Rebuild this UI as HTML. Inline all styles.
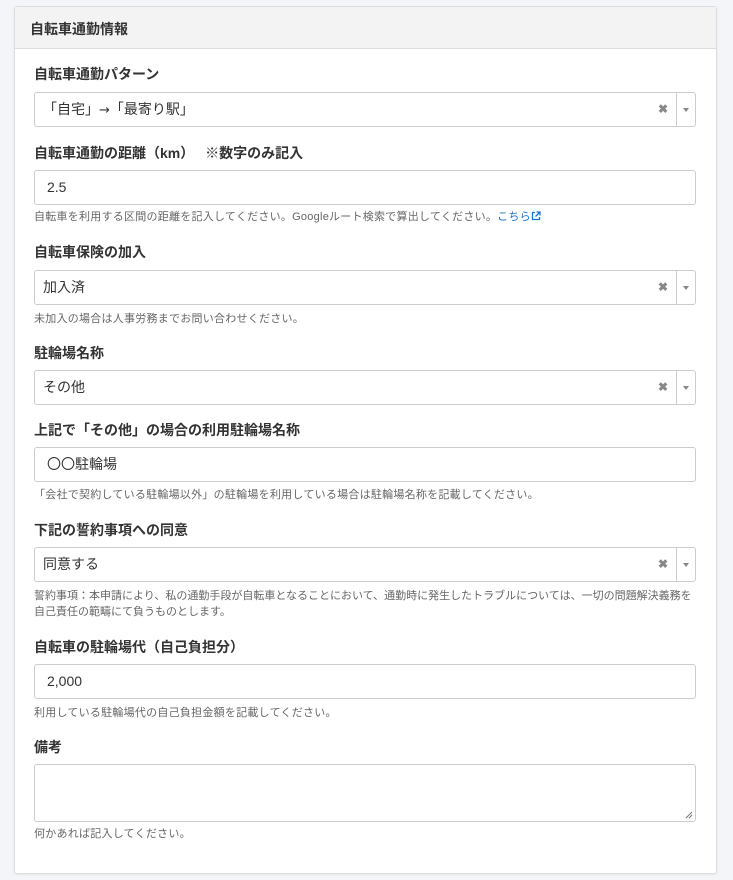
<!DOCTYPE html>
<html><head><meta charset="utf-8"><style>
*{box-sizing:border-box;margin:0;padding:0}
body{width:733px;height:880px;background:#f4f5f8;font-family:"Liberation Sans","Noto Sans CJK JP",sans-serif;color:#333;position:relative;overflow:hidden}
.panel{position:absolute;left:14px;top:6px;width:703px;height:868px;background:#fff;border:1px solid #ddd;border-radius:3px;box-shadow:0 1px 2px rgba(0,0,0,.06)}
.hd{position:absolute;left:0;top:0;right:0;height:42px;background:#f3f3f3;border-bottom:1px solid #ddd;font-size:14px;font-weight:bold;padding:12px 15px;color:#333}
.a{position:absolute;left:34px}
.lb{font-size:14px;font-weight:bold;color:#333;line-height:20px}
.in{width:662px;height:35px;border:1px solid #ccc;border-radius:3px;background:#fff;font-size:14px;padding:0 12px;line-height:33px;color:#333}
.sel{padding-left:8px}
.sel .x{position:absolute;right:27px;top:0;font-size:12px;color:#888;font-weight:bold}
.sel .ar{position:absolute;right:0;top:0;width:19px;height:33px;border-left:1px solid #ccc}
.sel .ar:after{content:"";position:absolute;left:6px;top:15px;border-left:3.5px solid transparent;border-right:3.5px solid transparent;border-top:4px solid #888}
.hp{font-size:11px;color:#666;line-height:16px;width:662px;letter-spacing:.25px}
a{color:#1a73c8;text-decoration:none}
</style></head><body>
<div class="panel"><div class="hd">自転車通勤情報</div></div>

<div class="a lb" style="top:64px">自転車通勤パターン</div>
<div class="a in sel" style="top:92px">「自宅」<span style="font-family:'DejaVu Sans';font-size:13px">→</span>「最寄り駅」<span class="x">✖</span><span class="ar"></span></div>

<div class="a lb" style="top:143px">自転車通勤の距離（km）　 ※数字のみ記入</div>
<div class="a in" style="top:170px">2.5</div>
<div class="a hp" style="top:209px">自転車を利用する区間の距離を記入してください。Googleルート検索で算出してください。<a>こちら<svg width="10" height="10" viewBox="0 0 10 10" style="vertical-align:-1px"><path d="M4 1.5H1.5v7h7V6" fill="none" stroke="#1a73c8" stroke-width="1.3"/><path d="M5.5 1h3.5v3.5M9 1L4.5 5.5" fill="none" stroke="#1a73c8" stroke-width="1.3"/></svg></a></div>

<div class="a lb" style="top:242px">自転車保険の加入</div>
<div class="a in sel" style="top:270px">加入済<span class="x">✖</span><span class="ar"></span></div>
<div class="a hp" style="top:311px">未加入の場合は人事労務までお問い合わせください。</div>

<div class="a lb" style="top:343px">駐輪場名称</div>
<div class="a in sel" style="top:370px">その他<span class="x">✖</span><span class="ar"></span></div>

<div class="a lb" style="top:420px">上記で「その他」の場合の利用駐輪場名称</div>
<div class="a in" style="top:447px">〇〇駐輪場</div>
<div class="a hp" style="top:487px">「会社で契約している駐輪場以外」の駐輪場を利用している場合は駐輪場名称を記載してください。</div>

<div class="a lb" style="top:520px">下記の誓約事項への同意</div>
<div class="a in sel" style="top:547px">同意する<span class="x">✖</span><span class="ar"></span></div>
<div class="a hp" style="top:588px;letter-spacing:0">誓約事項：本申請により、私の通勤手段が自転車となることにおいて、通勤時に発生したトラブルについては、一切の問題解決義務を自己責任の範疇にて負うものとします。</div>

<div class="a lb" style="top:637px">自転車の駐輪場代（自己負担分）</div>
<div class="a in" style="top:664px">2,000</div>
<div class="a hp" style="top:705px">利用している駐輪場代の自己負担金額を記載してください。</div>

<div class="a lb" style="top:737px">備考</div>
<div class="a in" style="top:764px;height:58px"><svg width="8" height="8" style="position:absolute;right:2px;bottom:2px"><path d="M1 7L7 1M4 7L7 4" stroke="#777" stroke-width="1"/></svg></div>
<div class="a hp" style="top:826px">何かあれば記入してください。</div>
</body></html>
